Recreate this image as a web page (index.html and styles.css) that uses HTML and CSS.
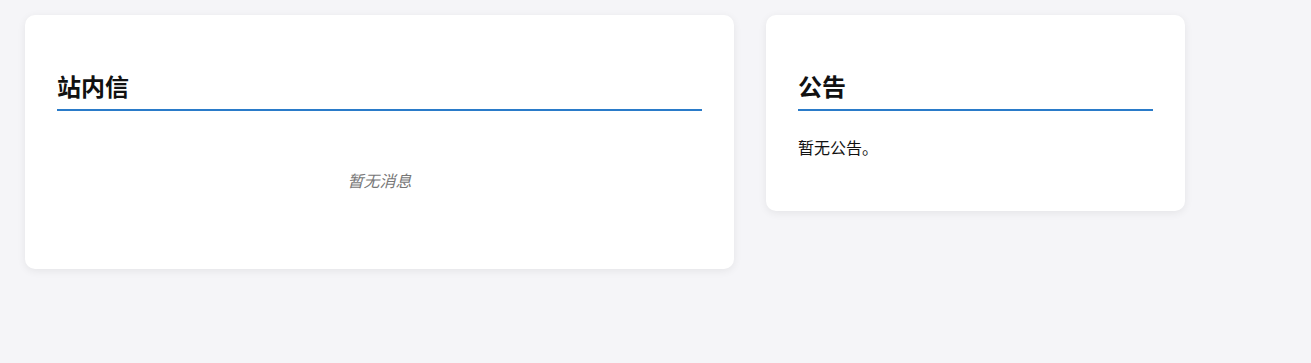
FILE: index.html
```html
<!DOCTYPE html>
<html lang="zh-CN">
<head>
    <meta charset="UTF-8">
    <meta name="viewport" content="width=device-width, initial-scale=1.0">
    <title>站内信</title>
    <link rel="stylesheet" href="styles.css">
</head>
<body>

    <div class="layout">
        <div class="card">
            <h2>站内信</h2>
            <div class="empty">暂无消息</div>
        </div>

        <div class="card">
            <h2>公告</h2>
            <p class="notice">暂无公告。</p>
        </div>
    </div>

</body>
</html>
```

FILE: styles.css
```css
body {
    font-family: "Noto Sans CJK SC", "Noto Sans", sans-serif;
    background: #f5f5f8;
    color: #111;
    margin: 0;
    padding: 15px 25px;
}

.layout {
    display: grid;
    grid-template-columns: 709px 419px;
    gap: 32px;
    align-items: start;
}

.card {
    background: white;
    padding: 32px;
    border-radius: 10px;
    box-shadow: 0 2px 8px rgba(0, 0, 0, 0.07);
}

.card h2 {
    font-size: 24px;
    line-height: 1.2;
    font-weight: bold;
    margin: 25px 0 24px;
    padding-bottom: 8px;
    border-bottom: 2px solid #2a7bc9;
}

.empty {
    text-align: center;
    color: #777;
    font-style: italic;
    font-size: 16px;
    line-height: 24px;
    padding: 33px 0 45px;
}

.notice {
    font-size: 16px;
    line-height: 24px;
    margin: 0 0 20px;
}
```
